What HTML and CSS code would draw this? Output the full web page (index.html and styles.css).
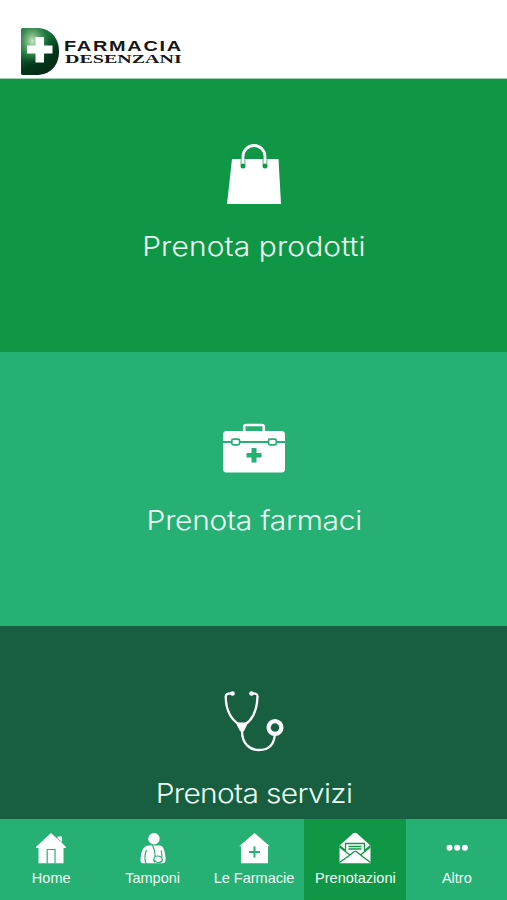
FILE: index.html
```html
<!DOCTYPE html>
<html lang="it">
<head>
<meta charset="utf-8">
<meta name="viewport" content="width=device-width, initial-scale=1">
<title>Farmacia Desenzani</title>
<link rel="stylesheet" href="styles.css">
</head>
<body>
<div class="app">
  <header class="header">
    <svg class="logo" width="164" height="50" viewBox="0 0 164 50">
      <defs>
        <linearGradient id="shade" x1="0" y1="0" x2="0.5" y2="1">
          <stop offset="0" stop-color="#2c6b40"/>
          <stop offset="0.4" stop-color="#12703a"/>
          <stop offset="0.72" stop-color="#04391a"/>
          <stop offset="1" stop-color="#062c15"/>
        </linearGradient>
        <radialGradient id="shine" cx="0.3" cy="0.28" r="0.5">
          <stop offset="0" stop-color="#d5efcd" stop-opacity="0.95"/>
          <stop offset="0.5" stop-color="#66b070" stop-opacity="0.6"/>
          <stop offset="1" stop-color="#138044" stop-opacity="0"/>
        </radialGradient>
      </defs>
      <path d="M1 2.500Q1 1 3 1H16C31 1 39 11 39 24.500S31 48 16 48H3Q1 48 1 46.500Z" fill="url(#shade)"/>
      <path d="M1 2.500Q1 1 3 1H16C31 1 39 11 39 24.500S31 48 16 48H3Q1 48 1 46.500Z" fill="url(#shine)"/>
      <path d="M15.500 10H24v8.500h8.500v8H24V35.500h-8.500V26.500H7v-8h8.500Z" fill="#fff"/>
      <text class="logo-sans" transform="translate(44 23.800) scale(1.42 1)" textLength="82.500" lengthAdjust="spacing">FARMACIA</text>
      <text class="logo-serif" transform="translate(45 35.900) scale(1.6 1)" textLength="73" lengthAdjust="spacing">DESENZANI</text>
    </svg>
  </header>

  <main class="tiles">
    <a class="tile tile-products">
      <svg class="tile-icon" width="90" height="90" viewBox="0 0 90 90">
        <path d="M22 29H68.500L71 74H17Z" fill="#fff"/>
        <g fill="none" stroke="#109746" stroke-width="1"><path d="M31.200 29v6M34.800 29v6M53.200 29v6M56.800 29v6"/></g>
        <path d="M33 35V26.500a11 11 0 0 1 22 0V35" fill="none" stroke="#fff" stroke-width="2.800"/>
        <circle cx="33" cy="36" r="2.500" fill="#109746"/>
        <circle cx="55" cy="36" r="2.500" fill="#109746"/>
      </svg>
      <span class="tile-label label-products">Prenota prodotti</span>
    </a>
    <a class="tile tile-drugs">
      <svg class="tile-icon" width="90" height="90" viewBox="0 0 90 90">
        <path d="M34.200 21v-4q0-2 2-2h15.600q2 0 2 2v4" fill="none" stroke="#fff" stroke-width="2.600"/>
        <rect x="13" y="21" width="62" height="41.500" rx="3.500" fill="#fff"/>
        <path d="M13 32h62" stroke="#26b073" stroke-width="2"/>
        <g fill="#fff" stroke="#26b073" stroke-width="1.800"><rect x="21.800" y="29.200" width="7.800" height="5.600" rx="1.500"/><rect x="58.500" y="29.200" width="7.800" height="5.600" rx="1.500"/></g>
        <path d="M41.500 38h5v5h5v4.500h-5v5h-5v-5h-5V43h5Z" fill="#26b073"/>
      </svg>
      <span class="tile-label label-drugs">Prenota farmaci</span>
    </a>
    <a class="tile tile-services">
      <svg class="tile-icon" width="90" height="90" viewBox="0 0 90 90">
        <g fill="none" stroke="#fff" stroke-width="2.300" stroke-linecap="round">
          <path d="M22 14.500Q15.500 14 15.700 18C16 30 20.500 40 29 45.500M41.500 14.500Q48 14 47.500 18C47 30 43.500 40 35 45.500"/>
          <path d="M32 52C32 65 40 71 49 71S64.500 66 65 54"/>
          <circle cx="65" cy="48.500" r="6.400" stroke-width="4.300"/>
        </g>
        <circle cx="22.500" cy="14.500" r="2.300" fill="#fff"/>
        <circle cx="41.500" cy="14.500" r="2.300" fill="#fff"/>
        <path d="M27.500 43.500h9q1.500 1 .3 3L34 52q-2 2-4 0l-3-5.500q-1-2 .5-3Z" fill="#fff"/>
      </svg>
      <span class="tile-label label-services">Prenota servizi</span>
    </a>
  </main>

  <nav class="tabs">
    <a class="tab">
      <svg class="tab-icon" width="32" height="32" viewBox="0 0 32 32" fill="#fff">
        <path d="M16 1 0.800 15 1.500 16H3.500V31.300H28.500V16H30.800L31 15 27 11V4.500H22.500V7Z"/>
        <path d="M22.500 6.500l4.500 4" stroke="#26b073" stroke-width=".8"/>
        <path d="M12.200 31.300V17.500h7.800v13.800" fill="none" stroke="#26b073" stroke-width="1.200"/>
      </svg>
      <span>Home</span>
    </a>
    <a class="tab">
      <svg class="tab-icon" width="32" height="32" viewBox="0 0 32 32" fill="#fff">
        <circle cx="17" cy="6.700" r="5.700"/>
        <path d="M11 13.500h12q3 0 4.500 6 1.500 6 1 9.500-.5 2.300-3 2.300H5.500Q3.500 31.300 3.500 28 4 14.500 11 13.500Z"/>
        <g fill="none" stroke="#26b073" stroke-width="1.200">
          <path d="M9.500 18Q6.800 24 8.800 31.500M15.500 13Q18 18 18.300 25M24.300 18.500l.7 7"/>
          <path d="M17.500 30.500q-2.300-5.500 2.500-6.500 4.500-.2 5.500 4-1 3-5 2.500-2.500-.2-3-2.500"/>
        </g>
      </svg>
      <span>Tamponi</span>
    </a>
    <a class="tab">
      <svg class="tab-icon" width="32" height="32" viewBox="0 0 32 32" fill="#fff">
        <path d="M16.500 1 31.800 14.200H30V31.300H3V14.200H1.200Z"/>
        <path d="M16.500 14.500V25.500M11 20h11" stroke="#26b073" stroke-width="2"/>
      </svg>
      <span>Le Farmacie</span>
    </a>
    <a class="tab tab-active">
      <svg class="tab-icon" width="32" height="32" viewBox="0 0 32 32" fill="#fff">
        <path d="M14 1.500Q16 0 18 1.500L31.500 13.500V31.300H.5V13.500Z"/>
        <path d="M.5 13.500 6.500 18.500V11.500H25.500V18.500L31.500 13.500" fill="none" stroke="#109746" stroke-width="1.300"/>
        <path d="M9.500 14.500h13M9.500 17h13" stroke="#109746" stroke-width="1.300"/>
        <path d="M.5 15 11 23 .5 30.500M31.500 15 21.500 23l10 7.500M11 23l3.500-3q1.700-1.300 3.500 0l3.500 3" fill="none" stroke="#109746" stroke-width="1.300"/>
      </svg>
      <span>Prenotazioni</span>
    </a>
    <a class="tab">
      <svg class="tab-icon" width="32" height="32" viewBox="0 0 32 32" fill="#fff">
        <circle cx="8.500" cy="15.800" r="3"/><circle cx="16.200" cy="15.800" r="3"/><circle cx="23.900" cy="15.800" r="3"/>
      </svg>
      <span>Altro</span>
    </a>
  </nav>
</div>
</body>
</html>
```
FILE: styles.css
```css
* {
  box-sizing: border-box;
}

body {
  margin: 0;
  background: #fff;
}

.app {
  display: flex;
  flex-direction: column;
  height: 900px;
  overflow: hidden;
}

.header {
  flex: none;
  height: 79px;
  padding: 27px 0 0 20px;
  border-bottom: 1px solid #9fd3b3;
  background: #fff;
}

.logo {
  display: block;
}

.logo-sans {
  font: bold 14px "Liberation Sans", Arial, sans-serif;
  fill: #161616;
}

.logo-serif {
  font: bold 12.5px "Liberation Serif", "Times New Roman", serif;
  fill: #161616;
}

.tiles {
  flex: 1;
  min-height: 0;
  overflow: hidden;
}

.tile {
  display: flex;
  flex-direction: column;
  align-items: center;
  height: 274px;
  padding: 51px 0 0 1px;
  color: #fff;
}

.tile-products {
  height: 273px;
  background: #109746;
}

.tile-drugs {
  padding-top: 58px;
  background: #26b073;
}

.tile-services {
  padding-top: 53px;
  background: #175f40;
}

.tile-icon {
  flex: none;
  display: block;
  margin-left: 2px;
}

.tile-label {
  font: 300 26.5px/40px Inter, "Open Sans", sans-serif;
  color: #edfff4;
  white-space: nowrap;
  transform: scaleX(1.13);
}

.label-products {
  margin-top: 6px;
  letter-spacing: 0.1px;
}

.label-drugs {
  letter-spacing: -0.25px;
}

.label-services {
  margin-top: 4px;
  letter-spacing: -0.6px;
}

.tabs {
  flex: none;
  display: grid;
  grid-template-columns: repeat(5, 1fr);
  height: 81px;
  background: #26b073;
}

.tab {
  display: flex;
  flex-direction: column;
  align-items: center;
  gap: 4px;
  padding: 13px 0 0 1px;
  font: 14.5px/20px "Liberation Sans", Arial, sans-serif;
  color: #f0fff6;
  white-space: nowrap;
}

.tab-active {
  background: #109746;
}

.tab-icon {
  flex: none;
  display: block;
}
```
